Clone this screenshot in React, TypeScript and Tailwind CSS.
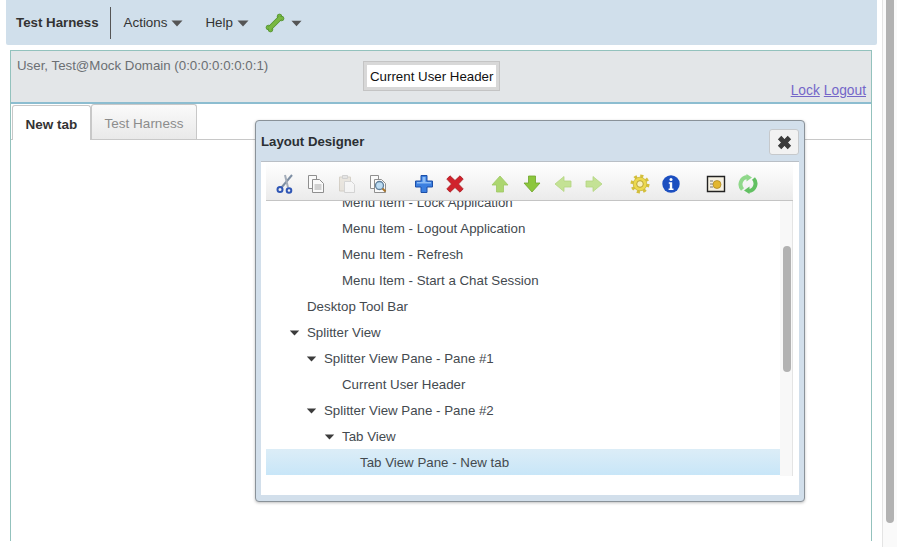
import type {ReactNode} from 'react';

const font = "font-['Liberation_Sans',Arial,sans-serif]";

function Caret({className}: {className: string}) {
  return (
    <svg viewBox="0 0 12 7" className={className} aria-hidden>
      <path d="M0.500 0.500h11L6 6.500z" fill="currentColor" />
    </svg>
  );
}

function Wrench() {
  return (
    <svg viewBox="0 0 20 20" className="h-5 w-5" aria-hidden>
      <g fill="#72b53f" stroke="#4f8f2a" strokeWidth="0.800">
        <circle cx="14.500" cy="3.400" r="2.300" />
        <circle cx="16.600" cy="5.500" r="2.300" />
        <circle cx="3.400" cy="14.500" r="2.300" />
        <circle cx="5.500" cy="16.600" r="2.300" />
      </g>
      <path d="M5 15 15 5" stroke="#4f8f2a" strokeWidth="5" />
      <path d="M4 16 16 4" stroke="#79b843" strokeWidth="3.800" />
    </svg>
  );
}

function Icon({children}: {children: ReactNode}) {
  return (
    <svg viewBox="0 0 20 20" width={20} height={20} className="shrink-0" aria-hidden>
      {children}
    </svg>
  );
}

function Doc() {
  return (
    <g fill="#fafafa" stroke="#8f8f8f" strokeWidth="1">
      <path d="M2.500 1.500h8v13h-8z" />
      <path d="M6.500 5.500h7l4 4v9h-11z" />
      <path d="M8.500 11h7M8.500 13h7M8.500 15h7" stroke="#a8a8a8" />
    </g>
  );
}

const toolbarIcons: Array<{key: string; gap: string; icon: ReactNode}> = [
  {
    key: 'cut',
    gap: 'ml-0',
    icon: (
      <Icon>
        <path d="M17 1 6.500 13.500" stroke="#7d8ea3" strokeWidth="2" fill="none" />
        <path d="M10 1 13 13.500" stroke="#a3acb8" strokeWidth="2" fill="none" />
        <circle cx="5" cy="15.500" r="2.500" fill="none" stroke="#2f56b5" strokeWidth="2" />
        <circle cx="14" cy="16.500" r="2.300" fill="none" stroke="#2f56b5" strokeWidth="2" />
      </Icon>
    )
  },
  {key: 'copy', gap: 'ml-[11px]', icon: <Icon><Doc /></Icon>},
  {
    key: 'paste',
    gap: 'ml-[11px]',
    icon: (
      <Icon>
        <g opacity={0.4}>
          <path d="M2.500 3h11v14h-11z" fill="#d9d0bf" stroke="#a89c86" />
          <path d="M5.500 1.500h5v3h-5z" fill="#c9c9c9" stroke="#999" />
          <path d="M7.500 7.500h7l3 3v8h-10z" fill="#fafafa" stroke="#aaa" />
        </g>
      </Icon>
    )
  },
  {
    key: 'preview',
    gap: 'ml-[11px]',
    icon: (
      <Icon>
        <Doc />
        <circle cx="11.500" cy="11.500" r="4" fill="#bcdcf3" stroke="#5f7f9c" strokeWidth="1.300" />
        <path d="m14.500 14.500 3 3" stroke="#a8742a" strokeWidth="2" />
      </Icon>
    )
  },
  {
    key: 'add',
    gap: 'ml-[26px]',
    icon: (
      <Icon>
        <path
          d="M7 1.500h6V7h5.500v6H13v5.500H7V13H1.500V7H7z"
          fill="#3b7fe0"
          stroke="#1c4fa8"
          strokeWidth="1"
        />
        <path d="M8.500 3h3v5H17v1.500H3V8h5.500z" fill="#8cbcf5" />
      </Icon>
    )
  },
  {
    key: 'remove',
    gap: 'ml-[11px]',
    icon: (
      <Icon>
        <path
          d="M5 1.800 10 6.500l5-4.700 3.200 3.300L13.500 10l4.700 4.900-3.200 3.300-5-4.700-5 4.700-3.200-3.300L6.500 10 1.800 5.100z"
          fill="#d0222c"
          stroke="#a81a20"
          strokeWidth="0.800"
        />
      </Icon>
    )
  },
  {
    key: 'up',
    gap: 'ml-[25px]',
    icon: (
      <Icon>
        <path d="M10 2 18 11h-4.500v7h-7v-7H2z" fill="#acd670" stroke="#9ec863" strokeWidth="0.800" />
      </Icon>
    )
  },
  {
    key: 'down',
    gap: 'ml-[12px]',
    icon: (
      <Icon>
        <path d="M10 18 2 9h4.500V2h7v7H18z" fill="#8cc63c" stroke="#6ea52b" strokeWidth="0.800" />
      </Icon>
    )
  },
  {
    key: 'left',
    gap: 'ml-[11px]',
    icon: (
      <Icon>
        <path d="M2 10 11 2.500V7h7v6h-7v4.500z" fill="#c4e295" stroke="#b4d682" strokeWidth="0.800" />
      </Icon>
    )
  },
  {
    key: 'right',
    gap: 'ml-[11px]',
    icon: (
      <Icon>
        <path d="M18 10 9 2.500V7H2v6h7v4.500z" fill="#c4e295" stroke="#b4d682" strokeWidth="0.800" />
      </Icon>
    )
  },
  {
    key: 'settings',
    gap: 'ml-[26px]',
    icon: (
      <Icon>
        <circle cx="10" cy="10" r="8" fill="none" stroke="#d4bf3c" strokeWidth="3" strokeDasharray="3.100 3.180" />
        <circle cx="10" cy="10" r="6.800" fill="#ecd94f" stroke="#c2ad30" strokeWidth="0.700" />
        <circle cx="10" cy="10" r="3.300" fill="#f8f1bd" stroke="#b39b26" strokeWidth="0.900" />
      </Icon>
    )
  },
  {
    key: 'info',
    gap: 'ml-[11px]',
    icon: (
      <Icon>
        <circle cx="10" cy="10" r="8.700" fill="#1c4fc0" />
        <circle cx="10" cy="5.500" r="1.500" fill="#fff" />
        <path d="M7.800 8.200h3.400v6.300h1.300V16H7.600v-1.500h1.200V9.700h-1z" fill="#fff" />
      </Icon>
    )
  },
  {
    key: 'image',
    gap: 'ml-[25px]',
    icon: (
      <Icon>
        <path d="M1.500 2.500h17v15h-17z" fill="#f5f0e2" stroke="#222" strokeWidth="1.400" />
        <circle cx="11" cy="10.500" r="4" fill="#e3b72f" stroke="#a7821c" strokeWidth="0.700" />
        <path d="M4 7h3M4 10h3M4 13h3" stroke="#777" strokeWidth="1" />
      </Icon>
    )
  },
  {
    key: 'refresh',
    gap: 'ml-[12px]',
    icon: (
      <Icon>
        <path d="M4.500 15.500A7.500 7.500 0 0 1 9 3" fill="none" stroke="#8fd88a" strokeWidth="4" />
        <path d="M8.500 0 14 3.500 8.500 7.500z" fill="#8fd88a" />
        <path d="M15.500 4.500A7.500 7.500 0 0 1 11 17" fill="none" stroke="#62c062" strokeWidth="4" />
        <path d="M11.500 20 6 16.500l5.500-4z" fill="#62c062" />
      </Icon>
    )
  }
];

const treeRows: Array<{label: string; indent: string; open?: boolean; selected?: boolean}> = [
  {label: 'Menu Item - Lock Application', indent: 'pl-[76px]'},
  {label: 'Menu Item - Logout Application', indent: 'pl-[76px]'},
  {label: 'Menu Item - Refresh', indent: 'pl-[76px]'},
  {label: 'Menu Item - Start a Chat Session', indent: 'pl-[76px]'},
  {label: 'Desktop Tool Bar', indent: 'pl-[41px]'},
  {label: 'Splitter View', indent: 'pl-[41px]', open: true},
  {label: 'Splitter View Pane - Pane #1', indent: 'pl-[58px]', open: true},
  {label: 'Current User Header', indent: 'pl-[76px]'},
  {label: 'Splitter View Pane - Pane #2', indent: 'pl-[58px]', open: true},
  {label: 'Tab View', indent: 'pl-[76px]', open: true},
  {label: 'Tab View Pane - New tab', indent: 'pl-[94px]', selected: true}
];

function LayoutDesigner() {
  return (
    <div className="absolute top-[120px] left-[255px] flex h-[382px] w-[550px] flex-col rounded-[4px] border border-[#8a9299] bg-[#d2dfeb] px-[5px] pb-[6px] shadow-[0_1px_3px_rgba(0,0,0,0.25)]">
      <div className="flex h-[40px] shrink-0 items-center justify-between pt-[2px]">
        <span className="text-[13.2px] font-bold text-[#2b2f33]">Layout Designer</span>
        <button
          type="button"
          className="flex h-[26px] w-[30px] items-center justify-center rounded-[3px] border border-[#c6c9cc] bg-[#f2f2f2]"
        >
          <svg viewBox="0 0 14 14" className="h-[15px] w-[15px]" aria-hidden>
            <path d="M1.500 4 4 1.500l3 3 3-3L12.500 4l-3 3 3 3-2.500 2.500-3-3-3 3L1.500 10l3-3z" fill="#3c3c3c" stroke="#3c3c3c" />
          </svg>
        </button>
      </div>
      <div className="min-h-0 flex-1 border-t border-[#b9bfc6] bg-white pr-[6px] pl-[5px]">
        <div className="flex h-[39px] items-center border-b border-[#c4c4c4] bg-gradient-to-b from-white to-[#ebebeb] pt-[5px] pl-[9px]">
          {toolbarIcons.map((item) => (
            <div key={item.key} className={item.gap}>
              {item.icon}
            </div>
          ))}
        </div>
        <div className="flex h-[275px] overflow-hidden">
          <div className="mt-[-12px] min-w-0 flex-1">
            {treeRows.map((row) => (
              <div
                key={row.label}
                className={`relative flex h-[26px] items-center pt-px text-[13.3px] text-[#444a4f] ${row.indent} ${
                  row.selected ? 'bg-gradient-to-b from-[#dcedf7] to-[#c8e6f8]' : ''
                }`}
              >
                {row.open && <Caret className="mr-[7px] ml-[-18px] h-[6px] w-[11px] text-[#3c3c3c]" />}
                {row.label}
              </div>
            ))}
          </div>
          <div className="w-[13px] shrink-0 border-r border-[#e4e4e4] bg-[#f8f8f8] pt-[45px] pl-[3px]">
            <div className="h-[126px] w-[8px] rounded-full bg-[#b2b2b2]" />
          </div>
        </div>
      </div>
    </div>
  );
}

export default function App() {
  return (
    <div className={`relative flex h-[547px] w-[897px] overflow-hidden bg-white ${font}`}>
      <div className="flex w-[882px] flex-col pl-[6px]">
        <div className="flex h-[45px] w-[871px] shrink-0 items-center rounded-b-[2px] bg-[#d0dfeb] pl-[10px] text-[13.4px] text-[#333]">
          <span className="pr-[11px] text-[13.3px] font-bold">Test Harness</span>
          <div className="h-[32px] w-px bg-[#555]" />
          <span className="mt-[2px] ml-[13px]">Actions</span>
          <Caret className="mt-px ml-[4px] h-[7px] w-[12px] text-[#555]" />
          <span className="mt-[2px] ml-[22px]">Help</span>
          <Caret className="mt-px ml-[4px] h-[7px] w-[12px] text-[#555]" />
          <div className="ml-[16px]">
            <Wrench />
          </div>
          <Caret className="mt-px ml-[6px] h-[7px] w-[11px] text-[#555]" />
        </div>
        <div className="mt-[5px] ml-[4px] flex h-[491px] w-[862px] flex-col border-x border-t border-[#93c2bd] ">
          <div className="relative h-[53px] shrink-0 border-b-2 border-[#8cbdd0] bg-[#e3e6e8] pt-[5px] pl-[6px] text-[13.3px] text-[#6b6f73]">
            User, Test@Mock Domain (0:0:0:0:0:0:0:1)
            <div className="absolute top-[11px] left-[353px] border-[3px] border-[#d8d8d8] bg-white px-[3px] pt-[2px] outline outline-1 outline-[#c4c4c4]">
              <span className="block text-[13.3px] leading-[20px] text-[#111]">Current User Header</span>
            </div>
            <div className="absolute right-[5px] bottom-[3px] flex gap-[4px] text-[13.8px] leading-[16px] text-[#7466c8] underline">
              <span>Lock</span>
              <span>Logout</span>
            </div>
          </div>
          <div className="flex h-[36px] shrink-0 items-end border-b border-[#c8c8c8] pl-px text-[13.5px]">
            <div className="mb-[-1px] flex h-[35px] w-[79px] items-center justify-center rounded-t-[3px] border-x border-t border-[#c8c8c8] bg-white pt-[5px] font-bold text-[#333]">
              New tab
            </div>
            <div className="flex h-[35px] w-[106px] items-center justify-center rounded-t-[3px] border-x border-t border-[#c8c8c8] bg-gradient-to-b from-[#fafafa] to-[#e9e9e9] pt-[5px] text-[#8c8c8c]">
              Test Harness
            </div>
          </div>
        </div>
      </div>
      <div className="w-[15px] shrink-0 border-l border-[#e4e4e4] bg-[#fafafa] pl-[3px]">
        <div className="h-[523px] w-[8px] rounded-b-full bg-[#b2b2b2]" />
      </div>
      <LayoutDesigner />
    </div>
  );
}
